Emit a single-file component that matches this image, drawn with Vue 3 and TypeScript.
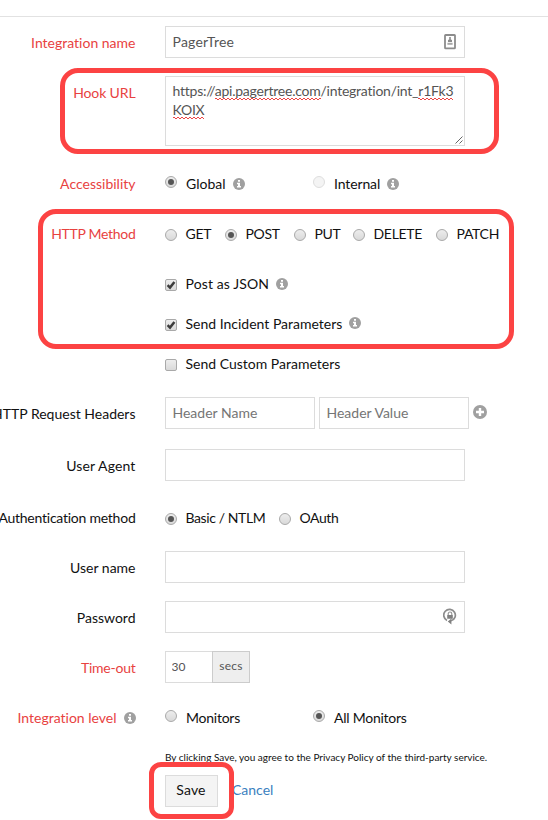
<script setup lang="ts">
import { ref, h, type FunctionalComponent } from 'vue'

interface Choice { id: string; text: string }

const name = ref('PagerTree')
const timeout = ref('30')
const method = ref('POST')
const methods: Choice[] = [
  { id: 'GET', text: 'GET' },
  { id: 'POST', text: 'POST' },
  { id: 'PUT', text: 'PUT' },
  { id: 'DELETE', text: 'DELETE' },
  { id: 'PATCH', text: 'PATCH' },
]

const InfoIcon: FunctionalComponent = () =>
  h('svg', { viewBox: '0 0 12 12', width: 12, height: 12 }, [
    h('circle', { cx: 6, cy: 6, r: 6, fill: '#a0a0a0' }),
    h('path', { d: 'M5 2h2v1.7H5zM4 4.8H7v3.3h1v1.5H4V8.1h1V6.2H4z', fill: '#fff' }),
  ])

const CheckMark: FunctionalComponent = () =>
  h('svg', { viewBox: '0 0 12 12', width: 12, height: 12 }, [
    h('path', { d: 'M2.6 6.2 5 8.6 9.4 3', fill: 'none', stroke: '#3c3c3c', 'stroke-width': 2.5 }),
  ])
</script>

<template>
  <main class="page">
    <form class="form" @submit.prevent>
      <div class="row">
        <label class="label req">Integration name</label>
        <div class="field wide">
          <input v-model="name" class="input roomy" />
          <svg class="contact" viewBox="0 0 12 16" width="12" height="16">
            <rect x="1" y="1" width="10" height="13.4" rx=".6" fill="#fff" stroke="#8c8c8c" stroke-width="1.8" />
            <path d="M5.2 3h1.6v2.4L8 6v2H4V6l1.2-.6z" fill="#8c8c8c" />
            <path d="M3.4 9.8h5.2" stroke="#a8a8a8" stroke-width="2" />
          </svg>
        </div>
      </div>

      <div class="row hook">
        <label class="label req snug">Hook URL</label>
        <div class="area" role="textbox">
          <div>https://<span class="bad">api.pagertree.com</span>/integration/int_<span class="bad">r1Fk3</span></div>
          <div><span class="bad">KOIX</span></div>
          <svg class="grip" viewBox="0 0 8 8" width="8" height="8">
            <path d="M.5 7.5 7.5.5M4.5 7.5l3-3" stroke="#555" stroke-width=".9" />
          </svg>
        </div>
      </div>

      <div class="row">
        <label class="label req">Accessibility</label>
        <div class="pair">
          <div class="choice raised"><i class="radio on"></i><span>Global</span><InfoIcon class="info" /></div>
          <div class="choice raised"><i class="radio off"></i><span class="snug">Internal</span><InfoIcon class="info" /></div>
        </div>
      </div>

      <div class="row">
        <label class="label req tight">HTTP Method</label>
        <div class="methods">
          <div v-for="m in methods" :key="m.id" class="choice tight" @click="method = m.id">
            <i class="radio" :class="{ on: method === m.id }"></i><span>{{ m.text }}</span>
          </div>
        </div>
      </div>

      <div class="row short">
        <span></span>
        <div class="choice"><i class="check"><CheckMark /></i><span class="loose">Post as JSON</span><InfoIcon class="info" /></div>
      </div>
      <div class="row short">
        <span></span>
        <div class="choice"><i class="check"><CheckMark /></i><span>Send Incident Parameters</span><InfoIcon class="info up" /></div>
      </div>
      <div class="row">
        <span></span>
        <div class="choice"><i class="check"></i><span>Send Custom Parameters</span></div>
      </div>

      <div class="row tall">
        <label class="label">HTTP Request Headers</label>
        <div class="pairs">
          <input class="input half" placeholder="Header Name" />
          <input class="input half" placeholder="Header Value" />
          <svg class="add" viewBox="0 0 14 14" width="14" height="14">
            <circle cx="7" cy="7" r="7" fill="#a0a0a0" />
            <path d="M7 3v8M3 7h8" stroke="#fff" stroke-width="2.4" />
          </svg>
        </div>
      </div>

      <div class="row tall">
        <label class="label loose">User Agent</label>
        <div class="field wide"><input class="input" /></div>
      </div>

      <div class="row">
        <label class="label close">Authentication method</label>
        <div class="auths">
          <div class="choice"><i class="radio on"></i><span class="tighter">Basic / NTLM</span></div>
          <div class="choice"><i class="radio"></i><span class="tighter">OAuth</span></div>
        </div>
      </div>

      <div class="row">
        <label class="label">User name</label>
        <div class="field wide"><input class="input" /></div>
      </div>

      <div class="row">
        <label class="label">Password</label>
        <div class="field wide">
          <input class="input" />
          <svg class="lock" viewBox="0 0 14 17" width="14" height="17">
            <path d="M4 12.4A5.8 5.8 0 1 1 8 12.8" fill="none" stroke="#8c8c8c" stroke-width="1.7" />
            <path d="M4.2 7h5.6v3.8H4.2zM8.4 10.6v6L4.8 13.6z" fill="#808080" />
            <path d="M5.2 7V5.8a1.8 1.8 0 0 1 3.6 0V7" fill="none" stroke="#909090" stroke-width="1.1" />
          </svg>
        </div>
      </div>

      <div class="row">
        <label class="label req close">Time-out</label>
        <div class="group"><input v-model="timeout" class="input secs" /><span class="addon">secs</span></div>
      </div>

      <div class="row">
        <label class="label req"><span>Integration level</span><InfoIcon class="info" /></label>
        <div class="pair">
          <div class="choice raised"><i class="radio"></i><span class="close">Monitors</span></div>
          <div class="choice raised"><i class="radio on"></i><span class="close">All Monitors</span></div>
        </div>
      </div>

      <p class="note">By clicking Save, you agree to the Privacy Policy of the third-party service.</p>
      <div class="actions">
        <button class="save">Save</button>
        <a class="cancel">Cancel</a>
      </div>
    </form>

    <div class="mark mark-hook"></div>
    <div class="mark mark-method"></div>
    <div class="mark mark-save"></div>
  </main>
</template>

<style>
body { background: #fff; }
</style>

<style scoped>
.page { position: relative; width: 548px; height: 820px; overflow: hidden; padding-top: 16px; box-sizing: border-box; font: 14px/20px Lato, "Open Sans", sans-serif; font-variant-ligatures: none; color: #111; }
.form { border-top: 1px solid #e2e2e2; padding-top: 9px; }
.row { display: grid; grid-template-columns: 135.5px 1fr; column-gap: 29.5px; height: 50px; align-items: start; }
.row.hook { height: 91px; }
.row.short { height: 40px; }
.row.tall { height: 52px; }
.label { display: flex; justify-content: flex-end; align-items: center; padding-top: 7px; white-space: nowrap; }
.req { color: #e8423f; }
.loose { letter-spacing: .12px; }
.snug { letter-spacing: -.12px; }
.close { letter-spacing: -.24px; }
.tight { letter-spacing: -.3px; }
.tighter { letter-spacing: -.4px; }
.field { position: relative; }
.wide { width: 300px; }
.input { display: block; box-sizing: border-box; width: 100%; height: 32px; border: 1px solid #dcdcdc; border-radius: 0; margin: 0; padding: 0 6.5px 1px; background: #fff; color: #555; font: inherit; outline: none; }
.input::placeholder { color: #757575; opacity: 1; }
.input.roomy { letter-spacing: .2px; }
.contact { position: absolute; right: 9px; top: 8px; }
.lock { position: absolute; right: 8px; top: 7px; }
.area { position: relative; box-sizing: border-box; width: 300px; height: 70px; border: 1px solid #dcdcdc; padding: 4px 6.5px; color: #555; line-height: 19px; letter-spacing: -.24px; white-space: nowrap; }
.bad {
  padding-bottom: 1px;
  background:
    linear-gradient(90deg, #ee4444 50%, transparent 50%) 0 calc(100% - 1px) / 4px 1px repeat-x,
    linear-gradient(90deg, transparent 50%, #ee4444 50%) 0 100% / 4px 1px repeat-x;
}
.grip { position: absolute; right: 1px; bottom: 1px; }
.choice { display: flex; align-items: center; height: 20px; padding-top: 7px; white-space: nowrap; }
.radio, .check { box-sizing: border-box; flex: none; width: 12px; height: 12px; margin-right: 8.5px; position: relative; top: 1px; border: 1px solid #a9a9a9; background: linear-gradient(#ededed, #d9d9d9); }
.radio { border-radius: 50%; display: grid; place-items: center; }
.raised .radio { margin-right: 9px; }
.check { border-radius: 2px; }
.check svg { position: absolute; left: -1px; top: -1px; }
.radio.on::after { content: ""; width: 6px; height: 6px; border-radius: 50%; background: #555; }
.radio.off { border-color: #dedede; background: #f4f4f4; }
.raised .radio { top: -2px; }
.info { flex: none; margin-left: 7px; }
.up { position: relative; top: -1px; }
.pair { display: grid; grid-template-columns: 148px 1fr; }
.methods { display: grid; grid-template-columns: 60px 69px 59px 83px 1fr; }
.auths { display: grid; grid-template-columns: 114px 1fr; }
.pairs { display: flex; gap: 4px; }
.half { width: 150px; }
.add { margin-top: 8px; }
.group { display: flex; }
.input.secs { width: 47px; border-right: 0; font-size: 12px; padding-left: 5.5px; }
.addon { box-sizing: border-box; width: 38px; height: 32px; border: 1px solid #ccc; background: #eee; color: #555; font-size: 12px; letter-spacing: .2px; line-height: 28px; text-align: center; }
.note { margin: -1px 0 0 165px; height: 25px; font-size: 10px; line-height: 14px; white-space: nowrap; }
.actions { display: flex; margin-left: 165px; gap: 14px; }
.save { box-sizing: border-box; width: 53px; height: 32px; border: 1px solid #dcdcdc; background: #f4f4f4; padding: 0 1px 2px 0; font: inherit; letter-spacing: .15px; color: #111; }
.cancel { color: #3b7fc0; line-height: 30px; }
.mark { position: absolute; box-sizing: border-box; border: 5px solid #fc4343; border-radius: 18px; pointer-events: none; }
.mark-hook { left: 60px; top: 68px; width: 439px; height: 86px; }
.mark-method { left: 38px; top: 209px; width: 476px; height: 140px; }
.mark-save { left: 149px; top: 762px; width: 85px; height: 57px; border-radius: 12px; }
</style>
